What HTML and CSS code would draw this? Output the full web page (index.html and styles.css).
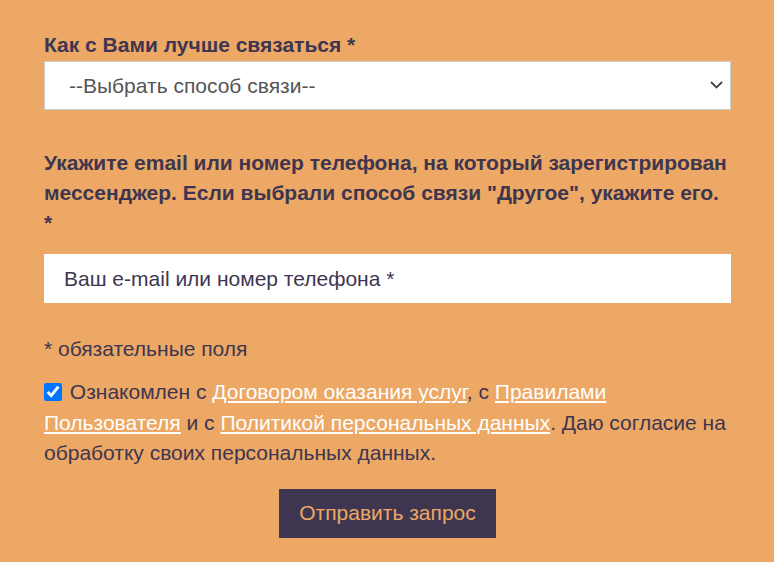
FILE: index.html
```html
<!DOCTYPE html>
<html lang="ru">
<head>
    <meta charset="UTF-8">
    <meta name="viewport" content="width=device-width, initial-scale=1.0">
    <title>Запрос</title>
    <link rel="stylesheet" href="styles.css">
</head>
<body>
    <form class="request-form">
        <label class="field-label" for="contact-way">Как с Вами лучше связаться *</label>
        <div class="select-wrap">
            <select id="contact-way" class="field-select">
                <option>--Выбрать способ связи--</option>
                <option>WhatsApp</option>
                <option>Telegram</option>
                <option>Другое</option>
            </select>
            <svg class="select-arrow" width="13" height="8" viewBox="0 0 13 8">
                <path d="M1 1 L6.5 6.5 L12 1" fill="none" stroke="#444" stroke-width="1.8"/>
            </svg>
        </div>

        <label class="field-label field-label-long" for="contact">Укажите email или номер телефона, на который зарегистрирован мессенджер. Если выбрали способ связи "Другое", укажите его. *</label>
        <input id="contact" class="field-input" type="text" placeholder="Ваш e-mail или номер телефона *">

        <div class="required-note">* обязательные поля</div>

        <div class="consent">
            <input type="checkbox" checked>
            Ознакомлен с <a href="#">Договором оказания услуг</a>, с <a href="#">Правилами Пользователя</a> и с <a href="#">Политикой персональных данных</a>. Даю согласие на обработку своих персональных данных.
        </div>

        <div class="submit-row">
            <button type="submit">Отправить запрос</button>
        </div>
    </form>
</body>
</html>
```

FILE: styles.css
```css
* {
    margin: 0;
    padding: 0;
    box-sizing: border-box;
}

body {
    font-family: 'Liberation Sans', Arial, sans-serif;
    background-color: #eca864;
    color: #3e3650;
    font-size: 21px;
}

.request-form {
    width: 687px;
    margin-left: 44px;
    padding-top: 30px;
    display: flex;
    flex-direction: column;
}

.field-label {
    display: block;
    font-weight: bold;
    line-height: 30px;
    margin-bottom: 1px;
}

.field-label-long {
    margin-top: 38px;
    margin-bottom: 16px;
}

.select-wrap {
    position: relative;
}

.field-select {
    width: 100%;
    height: 49px;
    padding-left: 24px;
    padding-right: 40px;
    appearance: none;
    background-color: #fff;
    border: 1px solid #ccc;
    border-radius: 0;
    color: #555;
    font-family: inherit;
    font-size: 21px;
}

.select-arrow {
    position: absolute;
    right: 8px;
    top: 20px;
    pointer-events: none;
}

.field-input {
    width: 100%;
    height: 49px;
    padding-left: 20px;
    background-color: #fff;
    border: none;
    color: #3e3650;
    font-family: inherit;
    font-size: 21px;
}

.field-input::placeholder {
    color: #3e3650;
    opacity: 1;
}

.required-note {
    margin-top: 31px;
    line-height: 30px;
}

.consent {
    margin-top: 13px;
    line-height: 30.5px;
}

.consent input {
    width: 18px;
    height: 18px;
    margin-right: 2px;
    vertical-align: -2px;
}

.consent a {
    color: #fff;
    text-decoration: underline;
}

.submit-row {
    display: flex;
    justify-content: center;
    margin-top: 20px;
}

.submit-row button {
    height: 49px;
    padding: 0 20px;
    background-color: #3e3650;
    color: #eca864;
    border: none;
    font-family: inherit;
    font-size: 21px;
    cursor: pointer;
}
```
